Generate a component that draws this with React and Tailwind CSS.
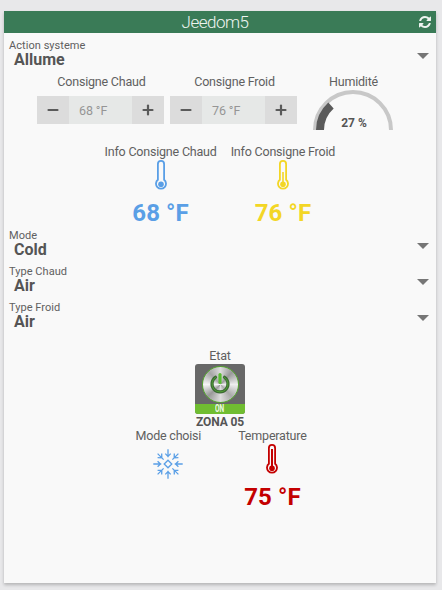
import React from 'react';

function Label({ children, className = '' }) {
  return (
    <div className={`h-4 whitespace-nowrap text-center text-[12.5px] leading-4 tracking-[-0.2px] text-[#606060] ${className}`}>
      {children}
    </div>
  );
}

function SelectRow({ label, value }) {
  return (
    <div className="flex h-9 items-start justify-between pl-[5px] pr-[7px]">
      <div>
        <div className="mt-px h-[14px] text-[11px] leading-[14px] tracking-[0.05px] text-[#606060]">{label}</div>
        <div className="h-[14px] pl-[5px] text-[16px] font-bold leading-[14px] text-[#555]">{value}</div>
      </div>
      <svg className="mt-[15px]" width="12" height="6" viewBox="0 0 12 6">
        <path d="M0 0h12L6 6z" fill="#767676" />
      </svg>
    </div>
  );
}

function StepButton({ plus }) {
  return (
    <button className="flex w-8 items-center justify-center bg-[#dcdcdc]">
      <svg className="-ml-px" width="12" height="12" viewBox="0 0 12 12" stroke="#5a5a5a" strokeWidth="2.2" strokeLinecap="round">
        <path d="M1.5 6h9" />
        {plus && <path d="M6 1.5v9" />}
      </svg>
    </button>
  );
}

function Stepper({ label, value }) {
  return (
    <div className="w-[127px]">
      <Label className="pl-[2px]">{label}</Label>
      <div className="mt-[6px] flex h-7">
        <StepButton />
        <div className="flex-1 bg-[#e6e8e7] pl-[10px] text-[12.5px] leading-[29px] tracking-[-0.1px] text-[#959595]">{value}</div>
        <StepButton plus />
      </div>
    </div>
  );
}

function Gauge() {
  return (
    <div className="ml-4 w-20">
      <Label className="pl-px">Humidité</Label>
      <div className="grid h-10">
        <svg className="col-start-1 row-start-1" width="80" height="40" viewBox="0 0 80 40" fill="none">
          <path d="M2 40a38 38 0 0 1 76 0" stroke="#c8c8c8" strokeWidth="4" />
          <path d="M7 40A33 33 0 0 1 18 15.4" stroke="#5b5b5b" strokeWidth="8" />
        </svg>
        <div className="col-start-1 row-start-1 self-end pl-[2px] text-center text-[12px] font-bold leading-[14px] text-[#555]">
          27 %
        </div>
      </div>
    </div>
  );
}

function Thermometer({ level = 22, thick = 1.6 }) {
  return (
    <svg width="12" height="30" viewBox="0 0 12 30" fill="none" stroke="currentColor">
      <path d="M2.9 19.8V4a3.1 3.1 0 0 1 6.2 0v15.8a5 5 0 1 1-6.2 0z" strokeWidth="1.8" />
      <circle cx="6" cy="24.2" r="2.8" fill="currentColor" stroke="none" />
      <path d={`M6 24V${level}`} strokeWidth={thick} />
    </svg>
  );
}

function Reading({ label, value, level, thick, className }) {
  return (
    <div className="flex flex-col items-center">
      <Label>{label}</Label>
      <div className={`flex flex-col items-center ${className}`}>
        <Thermometer level={level} thick={thick} />
        <div className="mt-[9px] whitespace-nowrap text-[24px] font-bold leading-7 tracking-[0.1px]">{value}</div>
      </div>
    </div>
  );
}

function Snowflake() {
  return (
    <svg width="30" height="30" viewBox="0 0 30 30" fill="none" stroke="#5a9fe6" strokeWidth="1.3">
      <path d="M15 11.200l3.800 3.800-3.800 3.800-3.800-3.800z" />
      {[0, 90, 180, 270].map((a) => (
        <path key={a} transform={`rotate(${a} 15 15)`} d="M15 0.300v8M12.300 4.600l2.700 2.800L17.700 4.600" />
      ))}
      {[45, 135, 225, 315].map((a) => (
        <path key={a} transform={`rotate(${a} 15 15)`} d="M15 0.300v8.500M12.100 3.200L15 6.200l2.900-3" />
      ))}
    </svg>
  );
}

function PowerImage() {
  return (
    <div className="flex h-[50px] w-[50px] flex-col overflow-hidden rounded-[3px] bg-[#686868]">
      <div className="flex h-10 items-center justify-center">
        <div className="flex h-[37px] w-[37px] items-center justify-center rounded-full border-[1.5px] border-[#55a92e] bg-[conic-gradient(#ddd,#999_12%,#eee_25%,#aaa_38%,#ddd_50%,#999_63%,#f5f5f5_75%,#a5a5a5_88%,#ddd)]">
          <svg width="22" height="24" viewBox="0 0 22 24" fill="none" strokeLinecap="round">
            <path d="M6.5 5.3a8 8 0 1 0 9 0" stroke="#3c6934" strokeWidth="3.2" />
            <path d="M11 2.5v8" stroke="#59bd32" strokeWidth="3.2" />
            <path d="M6.5 5.3a8 8 0 1 0 9 0" stroke="#529f36" strokeWidth="1" />
          </svg>
        </div>
      </div>
      <div className="flex h-[10px] items-center justify-center bg-[#70bd31]">
        <span className="scale-x-[0.6] text-[11px] font-bold leading-[10px] text-[#eef8e6]">ON</span>
      </div>
    </div>
  );
}

export default function App() {
  return (
    <div className="h-[590px] w-[442px] overflow-hidden bg-[#e8e8ea] pl-1 pt-[11px] font-['Roboto',sans-serif]">
      <div className="h-[572px] w-[432px] bg-[#f9f9f9] shadow-[0_2px_3px_rgba(0,0,0,0.22)]">
        <div className="flex h-[22px] items-center bg-[#3a7b57] text-[#eef4f0]">
          <div className="flex-1 pl-[7px] text-center text-[17px] font-light leading-[23px] tracking-[-0.5px]">Jeedom5</div>
          <svg className="mr-[5px]" width="12" height="12" viewBox="0 0 1536 1536" fill="currentColor">
            <path d="M1511 928q0 5-1 7-64 268-268 434.500T764 1536q-146 0-282.500-55T238 1324l-129 129q-19 19-45 19t-45-19-19-45V960q0-26 19-45t45-19h448q26 0 45 19t19 45-19 45l-137 137q71 66 161 102t187 36q134 0 250-65t186-179q11-17 53-117 8-23 30-23h192q13 0 22.500 9.500t9.500 22.500zM1536 128v448q0 26-19 45t-45 19h-448q-26 0-45-19t-19-45 19-45l138-138Q969 256 768 256q-134 0-250 65T332 500q-11 17-53 117-8 23-30 23H50q-13 0-22.500-9.500T18 608v-7q65-268 270-434.500T768 0q146 0 284 55.500T1297 212l130-129q19-19 45-19t45 19 19 45z" />
          </svg>
        </div>

        <div className="pt-[5px]">
          <SelectRow label="Action systeme" value="Allume" />
        </div>
        <div className="flex h-[70px] gap-[6px] pl-[33px]">
          <Stepper label="Consigne Chaud" value="68 °F" />
          <Stepper label="Consigne Froid" value="76 °F" />
          <div className="-ml-[6px]">
            <Gauge />
          </div>
        </div>
        <div className="flex h-[84px] gap-[14px] pl-[100.5px]">
          <Reading label="Info Consigne Chaud" value="68 °F" className="text-[#5a9fe6]" />
          <Reading label="Info Consigne Froid" value="76 °F" level={12} className="text-[#f3d625]" />
        </div>
        <SelectRow label="Mode" value="Cold" />
        <SelectRow label="Type Chaud" value="Air" />
        <SelectRow label="Type Froid" value="Air" />
        <div className="flex flex-col items-center pt-[12px]">
          <Label>Etat</Label>
          <PowerImage />
          <div className="h-[14px] text-[12px] font-bold leading-[16px] tracking-[-0.1px] text-[#555]">ZONA 05</div>
        </div>
        <div className="flex gap-[37px] pl-[131.5px]">
          <div className="flex flex-col items-center">
            <Label>Mode choisi</Label>
            <div className="mt-[5px]">
              <Snowflake />
            </div>
          </div>
          <Reading label="Temperature" value="75 °F" level={5} thick={2} className="text-[#c40000]" />
        </div>
      </div>
    </div>
  );
}
